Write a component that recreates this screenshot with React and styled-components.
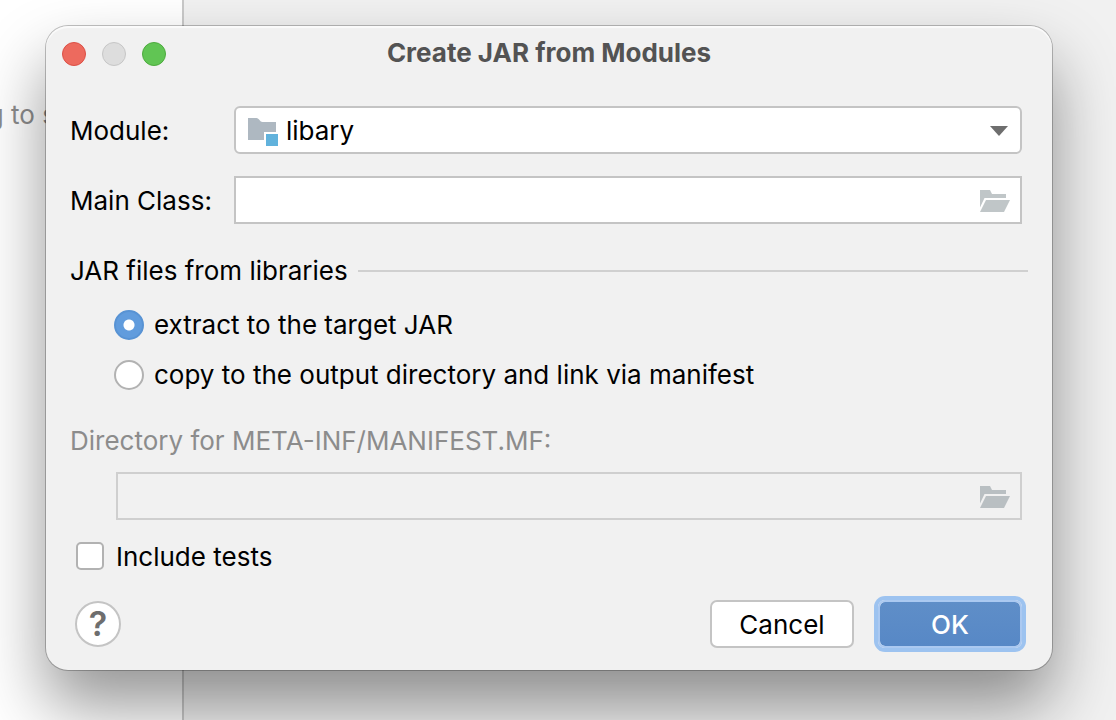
import React, { useState } from "react";
import styled, { createGlobalStyle } from "styled-components";

const GlobalStyle = createGlobalStyle`
  *, *::before, *::after { box-sizing: border-box; }
  body {
    margin: 0;
    font-family: Inter, "Liberation Sans", sans-serif;
    font-size: 26px;
    line-height: 30px;
    color: #000;
  }
  input, select, button { font: inherit; color: inherit; margin: 0; }
`;

const Workspace = styled.div`
  position: relative;
  display: flex;
  min-height: 100vh;
  overflow: hidden;
  background: #f1f1f1;
`;

const SidePane = styled.aside`
  flex: 0 0 184px;
  padding-top: 100px;
  background: #fff;
  border-right: 2px solid #c9c9c9;
`;

const EmptyNote = styled.p`
  display: flex;
  justify-content: flex-end;
  width: 56px;
  margin: 0;
  color: #8c8c8c;
  white-space: nowrap;
`;

const Dialog = styled.section`
  position: absolute;
  top: 26px;
  left: 46px;
  right: 64px;
  border-radius: 22px;
  background: #f1f1f1;
  box-shadow:
    inset 0 2px 1px rgba(255, 255, 255, 0.7),
    0 0 0 1px rgba(0, 0, 0, 0.24),
    0 36px 66px rgba(0, 0, 0, 0.42);
`;

const TitleBar = styled.header`
  display: grid;
  grid-template-columns: 1fr auto 1fr;
  align-items: center;
  height: 56px;
  padding: 0 16px;
`;

const WindowControls = styled.div`
  display: flex;
  gap: 16px;
`;

const WindowButton = styled.button`
  width: 24px;
  height: 24px;
  padding: 0;
  border: 1px solid ${(p) => p.$edge};
  border-radius: 50%;
  background: ${(p) => p.$fill};
`;

const Title = styled.h1`
  margin: 0;
  padding-bottom: 2px;
  font-size: 26px;
  line-height: 30px;
  font-weight: 700;
  color: #535353;
  white-space: nowrap;
`;

const Form = styled.form`
  display: flex;
  flex-direction: column;
  padding: 24px 30px 22px 24px;
`;

const Fields = styled.div`
  display: grid;
  grid-template-columns: 164px 1fr;
  row-gap: 22px;
  align-items: center;
`;

const FieldLabel = styled.label`
  padding-top: 2px;
`;

const FieldBox = styled.div`
  position: relative;
  display: flex;
  margin-left: ${(p) => p.$indent || 0}px;
`;

const Select = styled.select`
  appearance: none;
  flex: 1;
  height: 48px;
  padding: 2px 48px 0 50px;
  border: 2px solid #c4c4c4;
  border-radius: 6px;
  background: #fff;
`;

const TextInput = styled.input`
  flex: 1;
  min-width: 0;
  height: 48px;
  padding: 0 52px 0 12px;
  border: 2px solid #c4c4c4;
  border-radius: 0;
  background: #fff;

  &:disabled {
    border-color: #cfcfcf;
    background: transparent;
  }
`;

const LeadingIcon = styled.span`
  position: absolute;
  left: 14px;
  top: 12px;
  display: flex;
  pointer-events: none;
`;

const TrailingIcon = styled.span`
  position: absolute;
  right: 14px;
  top: 20px;
  display: flex;
  pointer-events: none;
`;

const BrowseButton = styled.button`
  position: absolute;
  right: 12px;
  top: 14px;
  display: flex;
  padding: 0;
  border: 0;
  background: none;
`;

const Group = styled.fieldset`
  min-width: 0;
  margin: 32px 0 0;
  padding: 0;
  border: 0;
`;

const GroupHeading = styled.div`
  display: flex;
  align-items: center;
  gap: 10px;
  margin-right: -6px;

  &::after {
    content: "";
    flex: 1;
    height: 2px;
    background: #d0d0d0;
  }
`;

const Choices = styled.div`
  display: flex;
  flex-direction: column;
  align-items: flex-start;
  gap: 20px;
  padding: 24px 0 0 44px;
`;

const Choice = styled.label`
  display: flex;
  align-items: center;
  gap: 10px;
  height: 30px;
`;

const Radio = styled.input`
  appearance: none;
  width: 30px;
  height: 30px;
  border: 2px solid #b2b2b2;
  border-radius: 50%;
  background: #fff;

  &:checked {
    border-color: #5893d4;
    background: radial-gradient(circle, #fff 0 5px, #619cdd 6px);
  }
`;

const DirectoryLabel = styled.label`
  margin: 36px 0 16px;
  color: #8c8c8c;
`;

const CheckRow = styled.label`
  display: flex;
  align-items: center;
  align-self: flex-start;
  gap: 12px;
  height: 28px;
  margin: 22px 0 0 6px;
`;

const CheckText = styled.span`
  padding-top: 2px;
`;

const CheckBox = styled.input`
  appearance: none;
  width: 28px;
  height: 28px;
  border: 2px solid #b2b2b2;
  border-radius: 5px;
  background: #fff;

  &:checked {
    border-color: #5893d4;
    background: #619cdd;
  }
`;

const Footer = styled.footer`
  display: flex;
  align-items: center;
  gap: 24px;
  margin-top: 30px;
`;

const HelpButton = styled.button`
  display: flex;
  width: 46px;
  height: 46px;
  margin: 0 auto 0 5px;
  padding: 0;
  border: 2px solid #c4c4c4;
  border-radius: 50%;
  background: #fff;
  align-items: center;
  justify-content: center;
  font-size: 34px;
  line-height: 40px;
  font-weight: 600;
  color: #6e6e6e;
`;

const ActionButton = styled.button`
  width: 144px;
  height: 48px;
  padding: 2px 0 0;
  border: 2px solid ${(p) => (p.$primary ? "#abc9f1" : "#c4c4c4")};
  border-radius: 7px;
  background: ${(p) =>
    p.$primary ? "linear-gradient(#5f8ec8, #5788c6) padding-box" : "#fff"};
  box-shadow: ${(p) => (p.$primary ? "0 0 0 4px #9dc3f0" : "none")};
  color: ${(p) => (p.$primary ? "#fff" : "#000")};
  font-weight: ${(p) => (p.$primary ? 500 : 400)};
`;

const ModuleIcon = () => (
  <svg width="30" height="28" viewBox="0 0 30 28" aria-hidden="true">
    <path d="M0 0h8.5c2.5 0 3.500 4 6 4H28v10H16v8H0z" fill="#aeb8c1" />
    <path d="M18 16h12v12H18z" fill="#61b2dc" />
  </svg>
);

const FolderIcon = ({ color = "#c0c6c8" }) => (
  <svg width="30" height="22" viewBox="0 0 30 22" aria-hidden="true">
    <path d="M0 0h10l2 4h14v4H4.500L0 17.500z" fill={color} />
    <path d="M6 10h24l-6 12H0z" fill={color} />
  </svg>
);

const ArrowIcon = () => (
  <svg width="18" height="10" viewBox="0 0 18 10" aria-hidden="true">
    <path d="M0 0h18L9 10z" fill="#6e6e6e" />
  </svg>
);

export default function App() {
  const [mode, setMode] = useState("extract");

  return (
    <>
      <GlobalStyle />
      <Workspace>
        <SidePane>
          <EmptyNote>g to s</EmptyNote>
        </SidePane>
        <Dialog role="dialog" aria-labelledby="dialog-title">
          <TitleBar>
            <WindowControls>
              <WindowButton aria-label="Close" $fill="#ed6a5e" $edge="#dc5046" />
              <WindowButton aria-label="Minimize" $fill="#dddddd" $edge="#c6c6c6" />
              <WindowButton aria-label="Zoom" $fill="#61c554" $edge="#4dab3e" />
            </WindowControls>
            <Title id="dialog-title">Create JAR from Modules</Title>
          </TitleBar>
          <Form onSubmit={(e) => e.preventDefault()}>
            <Fields>
              <FieldLabel htmlFor="module">Module:</FieldLabel>
              <FieldBox>
                <Select id="module" defaultValue="libary">
                  <option value="libary">libary</option>
                </Select>
                <LeadingIcon>
                  <ModuleIcon />
                </LeadingIcon>
                <TrailingIcon>
                  <ArrowIcon />
                </TrailingIcon>
              </FieldBox>
              <FieldLabel htmlFor="main-class">Main Class:</FieldLabel>
              <FieldBox>
                <TextInput id="main-class" type="text" />
                <BrowseButton type="button" aria-label="Browse main class">
                  <FolderIcon />
                </BrowseButton>
              </FieldBox>
            </Fields>

            <Group aria-labelledby="jar-files">
              <GroupHeading id="jar-files">JAR files from libraries</GroupHeading>
              <Choices>
                <Choice>
                  <Radio
                    type="radio"
                    name="mode"
                    checked={mode === "extract"}
                    onChange={() => setMode("extract")}
                  />
                  extract to the target JAR
                </Choice>
                <Choice>
                  <Radio
                    type="radio"
                    name="mode"
                    checked={mode === "copy"}
                    onChange={() => setMode("copy")}
                  />
                  copy to the output directory and link via manifest
                </Choice>
              </Choices>
            </Group>

            <DirectoryLabel htmlFor="manifest-dir">
              Directory for META-INF/MANIFEST.MF:
            </DirectoryLabel>
            <FieldBox $indent={46}>
              <TextInput id="manifest-dir" type="text" disabled={mode === "extract"} />
              <BrowseButton
                type="button"
                aria-label="Browse manifest directory"
                disabled={mode === "extract"}
              >
                <FolderIcon color="#b9bfc2" />
              </BrowseButton>
            </FieldBox>

            <CheckRow>
              <CheckBox type="checkbox" />
              <CheckText>Include tests</CheckText>
            </CheckRow>

            <Footer>
              <HelpButton type="button" aria-label="Help">?</HelpButton>
              <ActionButton type="button">Cancel</ActionButton>
              <ActionButton type="submit" $primary>OK</ActionButton>
            </Footer>
          </Form>
        </Dialog>
      </Workspace>
    </>
  );
}
